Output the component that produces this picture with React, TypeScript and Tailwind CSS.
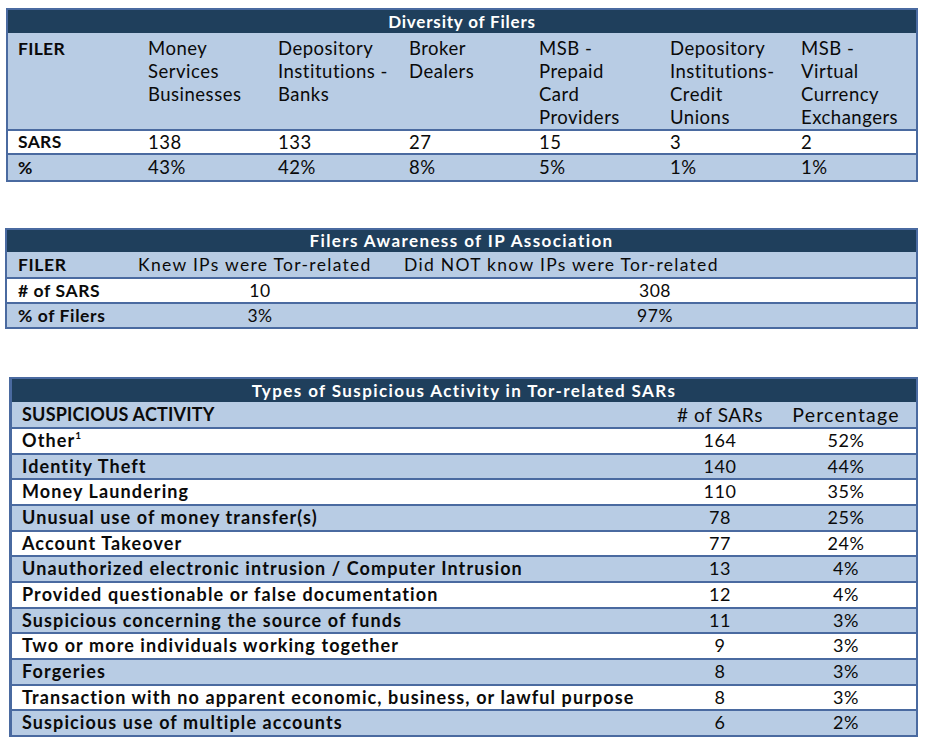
import React from "react";

const reg = "font-normal tracking-[0.5px]";

function T1() {
  const heads = [
    ["Money", "Services", "Businesses"],
    ["Depository", "Institutions -", "Banks"],
    ["Broker", "Dealers"],
    ["MSB -", "Prepaid", "Card", "Providers"],
    ["Depository", "Institutions-", "Credit", "Unions"],
    ["MSB -", "Virtual", "Currency", "Exchangers"],
  ];
  const sars = ["138", "133", "27", "15", "3", "2"];
  const pct = ["43%", "42%", "8%", "5%", "1%", "1%"];
  const grid = "grid grid-cols-[140px_130px_131px_130px_131px_131px_1fr]";
  return (
    <div className="ml-[6px] mt-[8px] w-[912px] border-2 border-[#4a6aa0]">
      <div className="h-[23px] bg-[#1f3f5c] text-center text-[17px] font-bold leading-[23px] tracking-[0.8px] text-white">
        Diversity of Filers
      </div>
      <div className={`${grid} h-[96px] bg-[#b8cce4] pt-[4px] text-[18.5px] leading-[23px]`}>
        <div className="pl-[10px] text-[17.5px] font-bold tracking-[0.3px]">FILER</div>
        {heads.map((h, i) => (
          <div key={i} className={`${reg} whitespace-nowrap`}>
            {h.map((l, j) => (
              <div key={j}>{l}</div>
            ))}
          </div>
        ))}
      </div>
      <div className={`${grid} h-[24px] border-t-2 border-[#4a6aa0] bg-white text-[18.5px] leading-[22px]`}>
        <div className="pl-[10px] text-[17.5px] font-bold tracking-[0.3px]">SARS</div>
        {sars.map((s, i) => (
          <div key={i} className={reg}>{s}</div>
        ))}
      </div>
      <div className={`${grid} h-[27px] border-t-2 border-[#4a6aa0] bg-[#b8cce4] text-[18.5px] leading-[25px]`}>
        <div className="pl-[10px] text-[17.5px] font-bold tracking-[0.3px]">%</div>
        {pct.map((s, i) => (
          <div key={i} className={reg}>{s}</div>
        ))}
      </div>
    </div>
  );
}

function T2() {
  const grid = "grid grid-cols-[123px_264px_1fr]";
  return (
    <div className="ml-[5px] mt-[46px] w-[913px] border-2 border-[#4a6aa0]">
      <div className="h-[22px] bg-[#1f3f5c] text-center text-[17px] font-bold leading-[22px] tracking-[1.4px] text-white">
        Filers Awareness of IP Association
      </div>
      <div className={`${grid} h-[25px] bg-[#b8cce4] text-[17.5px] leading-[25px]`}>
        <div className="pl-[11px] font-bold tracking-[0.6px]">FILER</div>
        <div className="pl-[8px] font-normal tracking-[1.3px] whitespace-nowrap">Knew IPs were Tor-related</div>
        <div className="pl-[10px] font-normal tracking-[1.3px] whitespace-nowrap">Did NOT know IPs were Tor-related</div>
      </div>
      <div className={`${grid} h-[25px] border-t-2 border-[#4a6aa0] bg-white text-[17.5px] leading-[23px]`}>
        <div className="pl-[11px] font-bold tracking-[0.6px] whitespace-nowrap"># of SARS</div>
        <div className={`${reg} text-center pr-[4px]`}>10</div>
        <div className={`${reg} text-center`}>308</div>
      </div>
      <div className={`${grid} h-[25px] border-t-2 border-[#4a6aa0] bg-[#b8cce4] text-[17.5px] leading-[23px]`}>
        <div className="pl-[11px] font-bold tracking-[0.6px] whitespace-nowrap">% of Filers</div>
        <div className={`${reg} text-center pr-[4px]`}>3%</div>
        <div className={`${reg} text-center`}>97%</div>
      </div>
    </div>
  );
}

function T3() {
  const rows: [React.ReactNode, string, string][] = [
    [
      <>
        Other<sup className="relative top-[-1px] align-super text-[10px]">1</sup>
      </>,
      "164",
      "52%",
    ],
    ["Identity Theft", "140", "44%"],
    ["Money Laundering", "110", "35%"],
    ["Unusual use of money transfer(s)", "78", "25%"],
    ["Account Takeover", "77", "24%"],
    ["Unauthorized electronic intrusion / Computer Intrusion", "13", "4%"],
    ["Provided questionable or false documentation", "12", "4%"],
    ["Suspicious concerning the source of funds", "11", "3%"],
    ["Two or more individuals working together", "9", "3%"],
    ["Forgeries", "8", "3%"],
    ["Transaction with no apparent economic, business, or lawful purpose", "8", "3%"],
    ["Suspicious use of multiple accounts", "6", "2%"],
  ];
  const grid = "grid grid-cols-[1fr_126px_126px_7px]";
  return (
    <div className="ml-[9px] mt-[48px] w-[909px] border-2 border-l-[3px] border-[#4a6aa0]">
      <div className="h-[23px] bg-[#1f3f5c] text-center text-[17px] font-bold leading-[23px] tracking-[1.4px] text-white">
        Types of Suspicious Activity in Tor-related SARs
      </div>
      <div className={`${grid} h-[25px] bg-[#b8cce4] text-[18px] leading-[25px]`}>
        <div className="pl-[10px] font-bold tracking-[0.2px]">SUSPICIOUS ACTIVITY</div>
        <div className="text-center text-[19px] font-normal tracking-[0.6px] whitespace-nowrap"># of SARs</div>
        <div className="text-center text-[19.5px] font-normal tracking-[1.2px] whitespace-nowrap">Percentage</div>
        <div />
      </div>
      {rows.map(([label, n, p], i) => (
        <div
          key={i}
          className={`${grid} h-[25.67px] border-t-2 border-[#4a6aa0] text-[18px] leading-[23.67px] ${
            i % 2 === 0 ? "bg-white" : "bg-[#b8cce4]"
          }`}
        >
          <div className="pl-[10px] font-bold tracking-[1.1px] whitespace-nowrap">{label}</div>
          <div className={`${reg} text-center`}>{n}</div>
          <div className={`${reg} text-center`}>{p}</div>
          <div />
        </div>
      ))}
    </div>
  );
}

export default function App() {
  return (
    <div className="min-h-[745px] w-[926px] bg-white font-['Lato','Liberation_Sans',sans-serif] text-[#0a0a0a]">
      <T1 />
      <T2 />
      <T3 />
    </div>
  );
}
